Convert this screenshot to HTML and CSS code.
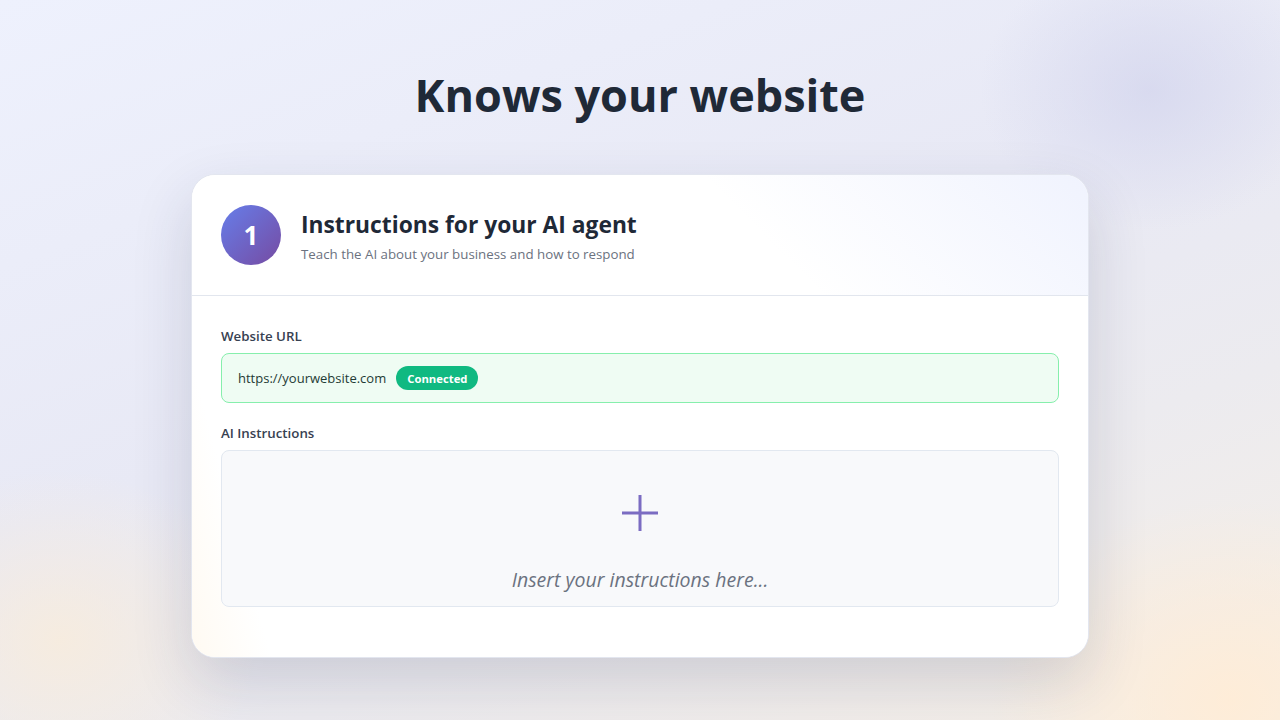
FILE: index.html
```html
<!DOCTYPE html>
<html lang="en">
<head>
<meta charset="utf-8">
<title>Knows your website</title>
<link rel="stylesheet" href="styles.css">
</head>
<body>
<main class="page">
  <h1 class="hero-title">Knows your website</h1>
  <section class="card">
    <header class="card-header">
      <div class="step">1</div>
      <div class="header-text">
        <h2 class="card-title">Instructions for your AI agent</h2>
        <p class="card-sub">Teach the AI about your business and how to respond</p>
      </div>
    </header>
    <div class="card-body">
      <div class="field">
        <div class="field-label">Website URL</div>
        <div class="url-box">
          <span class="url-text">https://yourwebsite.com</span>
          <span class="badge">Connected</span>
        </div>
      </div>
      <div class="field">
        <div class="field-label">AI Instructions</div>
        <div class="drop-box">
          <svg class="plus" width="40" height="40" viewBox="0 0 40 40" aria-hidden="true">
            <path d="M20 2 V38 M2 20 H38" stroke="#7b6cc2" stroke-width="3" fill="none"/>
          </svg>
          <div class="drop-text">Insert your instructions here...</div>
        </div>
      </div>
    </div>
  </section>
</main>
</body>
</html>
```
FILE: styles.css
```css
* { box-sizing: border-box; }
html, body { margin: 0; padding: 0; }
body {
  width: 1280px;
  height: 720px;
  overflow: hidden;
  font-family: "Segoe UI", "Open Sans", "Noto Sans", sans-serif;
  background:
    radial-gradient(ellipse 170px 140px at 1150px 90px, rgba(208,210,236,0.65), rgba(208,210,236,0)),
    radial-gradient(ellipse 240px 200px at 1230px 700px, rgba(255,236,214,0.9), rgba(255,236,214,0)),
    radial-gradient(ellipse 200px 170px at 60px 640px, rgba(248,236,220,0.85), rgba(248,236,220,0)),
    linear-gradient(160deg, #eef1fd 0%, #e8e9f5 45%, #ecebef 70%, #f6efe6 100%);
  color: #1f2937;
}
.page {
  display: flex;
  flex-direction: column;
  align-items: center;
  padding-top: 63px;
}
.hero-title {
  margin: 0;
  font-size: 45px;
  font-weight: 700;
  line-height: 64px;
  color: #1f2937;
}
.card {
  margin-top: 47px;
  width: 898px;
  background: #fff;
  border-radius: 24px;
  border: 1px solid #e3e6ef;
  box-shadow: 0 24px 60px rgba(40, 45, 80, 0.16);
  overflow: hidden;
}
.card-header {
  display: flex;
  align-items: center;
  gap: 20px;
  padding: 30px 29px 30px;
  border-bottom: 1px solid #e2e6ee;
  background: linear-gradient(225deg, #f0f3fe 0%, #ffffff 38%);
}
.step {
  width: 60px; height: 60px;
  border-radius: 50%;
  background: linear-gradient(135deg, #667eea 0%, #764ba2 100%);
  color: #fff;
  font-size: 26px;
  font-weight: 700;
  display: flex;
  align-items: center;
  justify-content: center;
  flex-shrink: 0;
}
.header-text { display: flex; flex-direction: column; padding-top: 4px; }
.card-title {
  margin: 0;
  font-size: 22.8px;
  font-weight: 700;
  line-height: 30px;
  color: #1f2937;
}
.card-sub {
  margin: 4px 0 0;
  font-size: 13.3px;
  color: #6b7280;
  line-height: 20px;
}
.card-body {
  padding: 31px 29px 50px;
  display: flex;
  flex-direction: column;
  gap: 21px;
  background: linear-gradient(75deg, #fffaf2 0%, #ffffff 8%);
}
.field { display: flex; flex-direction: column; gap: 8px; }
.field-label {
  font-size: 13.3px;
  font-weight: 600;
  color: #374151;
  line-height: 18px;
}
.url-box {
  height: 50px;
  display: flex;
  align-items: center;
  gap: 10px;
  padding: 0 16px;
  background: #effcf3;
  border: 1px solid #86efac;
  border-radius: 8px;
}
.url-text {
  font-size: 13px;
  color: #1f3b35;
}
.badge {
  background: #10b981;
  color: #fff;
  font-size: 11.3px;
  font-weight: 700;
  height: 24px;
  padding: 0 11px;
  border-radius: 12px;
  display: flex;
  align-items: center;
}
.drop-box {
  height: 157px;
  background: #f8f9fb;
  border: 1px solid #e2e8f0;
  border-radius: 8px;
  display: flex;
  flex-direction: column;
  align-items: center;
  padding-top: 42px;
}
.plus { display: block; }
.drop-text {
  margin-top: 34px;
  font-size: 19.5px;
  font-style: italic;
  color: #6b7280;
  line-height: 26px;
}
```
